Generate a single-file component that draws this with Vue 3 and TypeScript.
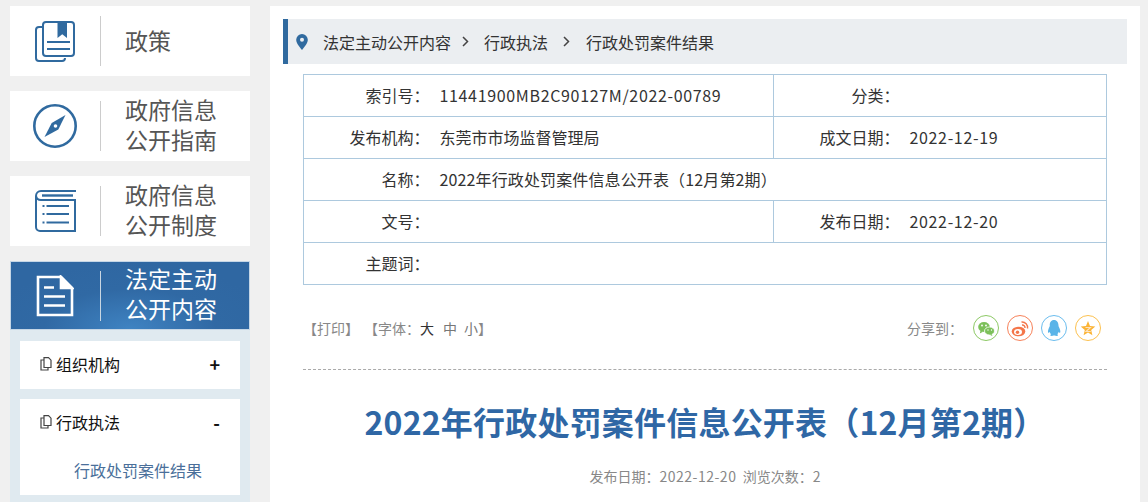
<script setup lang="ts">
interface Row { label: string; value: string; num?: boolean; wide?: boolean; label2?: string; value2?: string }
const rows: Row[] = [
  { label: '索引号：', value: '11441900MB2C90127M/2022-00789', num: true, label2: '分类：', value2: '' },
  { label: '发布机构：', value: '东莞市市场监督管理局', label2: '成文日期：', value2: '2022-12-19' },
  { label: '名称：', value: '2022年行政处罚案件信息公开表（12月第2期）', wide: true },
  { label: '文号：', value: '', label2: '发布日期：', value2: '2022-12-20' },
  { label: '主题词：', value: '' },
]
</script>

<template>
  <div class="page">
    <aside class="side">
      <a class="card">
        <span class="ico">
          <svg width="42" height="44" viewBox="0 -1 42 44" fill="none" stroke="#306a9f" stroke-width="2">
            <path d="M9 7H5a3 3 0 0 0-3 3V38a3 3 0 0 0 3 3H28a3 3 0 0 0 3-3" />
            <rect x="9" y="2" width="31" height="34" rx="3" />
            <path d="M23.500 1h9.500v17l-4.750-3.800-4.750 3.800z" fill="#306a9f" stroke="none" />
            <path d="M13 22h23M13 29h23" />
          </svg>
        </span>
        <span class="sep"></span>
        <span class="txt"><span class="ln">政策</span></span>
      </a>
      <a class="card">
        <span class="ico">
          <svg width="44" height="44" viewBox="0 0 44 44" fill="none">
            <circle cx="22" cy="22" r="20.700" stroke="#306a9f" stroke-width="2.600" />
            <path d="M32.500 11 25.300 25.500 11.500 33 18.700 19z" fill="#306a9f" />
            <circle cx="22.500" cy="22" r="1.800" fill="#fff" />
          </svg>
        </span>
        <span class="sep"></span>
        <span class="txt two"><span class="ln">政府信息</span><span class="ln">公开指南</span></span>
      </a>
      <a class="card">
        <span class="ico">
          <svg width="44" height="44" viewBox="0 0 44 44" fill="none" stroke="#306a9f" stroke-width="2">
            <path d="M43 2H8a5 5 0 0 0-5 5v31a4 4 0 0 0 4 4H42V11H8a5 5 0 0 1-5-4" />
            <path d="M9 6.500h31" stroke-width="2.400" />
            <path d="M13.500 17H36M13.500 25H36M13.500 33.500H36" stroke-width="2.200" />
            <path d="M9.500 17h2M9.500 25h2M9.500 33.500h2" stroke-dasharray="2 2" />
          </svg>
        </span>
        <span class="sep"></span>
        <span class="txt two"><span class="ln">政府信息</span><span class="ln">公开制度</span></span>
      </a>
      <div class="group">
        <a class="card active">
          <span class="ico">
            <svg width="38" height="42" viewBox="0 0 38 42" fill="none" stroke="#fff" stroke-width="2.600">
              <path d="M2 2H25L36 13V40H2z" />
              <path d="M25 2L36 13H25z" fill="#fff" />
              <path d="M8 12.500h10M8 21.500h21M8 30.500h21" />
            </svg>
          </span>
          <span class="sep"></span>
          <span class="txt two"><span class="ln">法定主动</span><span class="ln">公开内容</span></span>
        </a>
        <div class="panel">
          <div class="item">
            <div class="item-head">
              <svg class="doc" width="12" height="14" viewBox="0 0 12 14" fill="none" stroke="#444" stroke-width="1.200">
                <path d="M4 .7h4.500L11 3.200v7.300H4z" />
                <path d="M4 3H1v10h7v-2.500" />
              </svg>
              <span class="item-name">组织机构</span>
              <span class="mark">+</span>
            </div>
          </div>
          <div class="item">
            <div class="item-head">
              <svg class="doc" width="12" height="14" viewBox="0 0 12 14" fill="none" stroke="#444" stroke-width="1.200">
                <path d="M4 .7h4.500L11 3.200v7.300H4z" />
                <path d="M4 3H1v10h7v-2.500" />
              </svg>
              <span class="item-name">行政执法</span>
              <span class="mark">-</span>
            </div>
            <div class="sub">行政处罚案件结果</div>
          </div>
        </div>
      </div>
    </aside>

    <main class="main">
      <nav class="crumb">
        <svg class="pin" width="12" height="16" viewBox="0 0 12 16">
          <path fill-rule="evenodd" fill="#306a9f" d="M6 0a5.800 5.800 0 0 1 5.800 5.800C11.800 9.500 8 13.500 6 16 4 13.500.2 9.500.2 5.800A5.800 5.800 0 0 1 6 0zm0 3.800a2 2 0 1 0 0 4 2 2 0 0 0 0-4z" />
        </svg>
        <span>法定主动公开内容</span>
        <svg class="chev first" width="7" height="11" viewBox="0 0 7 11" fill="none" stroke="#444" stroke-width="1.500"><path d="m1 1 4.500 4.500L1 10" /></svg>
        <span>行政执法</span>
        <svg class="chev" width="7" height="11" viewBox="0 0 7 11" fill="none" stroke="#444" stroke-width="1.500"><path d="m1 1 4.500 4.500L1 10" /></svg>
        <span>行政处罚案件结果</span>
      </nav>

      <div class="wrap">
        <table class="meta">
          <colgroup>
            <col class="c1" /><col class="c2" /><col class="c3" /><col class="c4" />
          </colgroup>
          <tbody>
            <tr v-for="r in rows" :key="r.label">
              <td class="k">{{ r.label }}</td>
              <td v-if="r.label2 !== undefined" class="v" :class="{ num: r.num }">{{ r.value }}</td>
              <td v-else class="v" :class="{ wide: r.wide }" colspan="3">{{ r.value }}</td>
              <template v-if="r.label2 !== undefined">
                <td class="k">{{ r.label2 }}</td>
                <td class="v num">{{ r.value2 }}</td>
              </template>
            </tr>
          </tbody>
        </table>

        <div class="tools">
          <div class="print">
            <span>【打印】</span>
            <span class="fontset">【字体：<b class="big">大</b><i class="mid">中</i><i>小</i>】</span>
          </div>
          <div class="share">
            <span class="share-label">分享到：</span>
            <span class="sico wx">
              <svg width="18" height="18" viewBox="0 0 18 18">
                <ellipse cx="7" cy="8" rx="5.800" ry="5" fill="#7cc05a" />
                <path d="M3.500 11.500l-.7 3 3.200-1.700z" fill="#7cc05a" />
                <ellipse cx="12.500" cy="12" rx="5" ry="4" fill="#7cc05a" stroke="#fff" stroke-width=".8" />
                <path d="M14.500 15l1 2-3-1.200z" fill="#7cc05a" />
                <circle cx="5" cy="6.500" r=".9" fill="#fff" /><circle cx="9" cy="6.500" r=".9" fill="#fff" />
                <circle cx="11" cy="11" r=".7" fill="#fff" /><circle cx="14.500" cy="11" r=".7" fill="#fff" />
              </svg>
            </span>
            <span class="sico wb">
              <svg width="18" height="18" viewBox="0 0 18 18">
                <ellipse cx="7.500" cy="12.500" rx="6.800" ry="4.800" fill="#f4764a" />
                <ellipse cx="7" cy="13" rx="4" ry="2.900" fill="#fff" />
                <circle cx="6.500" cy="13.300" r="1.700" fill="#f4764a" />
                <path d="M10.500 3a5.500 5.500 0 0 1 6 6.500M11 6a2.700 2.700 0 0 1 3 3" fill="none" stroke="#f4764a" stroke-width="1.400" />
              </svg>
            </span>
            <span class="sico qq">
              <svg width="18" height="18" viewBox="0 0 18 18">
                <path fill="#5ab4e8" d="M9 1c3 0 4.500 2.500 4.500 5.500 0 1 .7 2 1.200 3.200.8 2 .8 3.800.3 4.100-.4.200-1-.4-1.300-1-.3 1.100-.8 2-1.500 2.500.7.300 1 .7.800 1.100-.3.600-2 .6-3.300.2H9.300c-.2 0-.4 0-.7 0-1.300.4-3 .4-3.300-.2-.2-.4.1-.8.800-1.100-.7-.5-1.200-1.400-1.500-2.500-.3.600-.9 1.200-1.300 1-.5-.3-.5-2.100.3-4.100.5-1.200 1.200-2.200 1.200-3.200C4.500 3.500 6 1 9 1z" />
              </svg>
            </span>
            <span class="sico st">
              <svg width="18" height="18" viewBox="0 0 18 18">
                <path fill="#fbb436" d="M9 2l2 5 5.300.5-4.100 3.500 1.200 5.200L9 13.400 4.600 16.200 5.800 11 1.700 7.500 7 7z" />
                <path d="M6.500 8.500h5l-4.500 4h4.800" fill="none" stroke="#fde2c0" stroke-width="1.100" />
              </svg>
            </span>
          </div>
        </div>

        <div class="dash"></div>
        <h1 class="title">2022年行政处罚案件信息公开表（12月第2期）</h1>
        <p class="info">发布日期：<span class="num-s">2022-12-20</span>&nbsp;&nbsp;浏览次数：2</p>
      </div>
    </main>
  </div>
</template>

<style>
html, body { margin: 0; background: #f0f0f0; overflow: hidden; }
</style>

<style scoped>
.page {
  width: 1148px;
  height: 502px;
  overflow: hidden;
  display: flex;
  align-items: flex-start;
  box-sizing: border-box;
  padding: 6px 8px 0 10px;
  gap: 20px;
  font-family: "Noto Sans CJK SC", "Noto Sans", sans-serif;
  color: #333;
}
.side { width: 240px; flex: none; display: flex; flex-direction: column; gap: 15px; }
.card {
  height: 70px;
  background: #fff;
  display: flex;
  align-items: center;
}
.ico { width: 90px; flex: none; display: flex; justify-content: center; align-items: center; }
.sep { width: 1px; height: 50px; background: #ccc; flex: none; }
.txt { margin-left: 24px; font-size: 23px; padding-bottom: 3px; color: #555; }
.txt.two { padding-bottom: 5px; }
.ln { display: block; line-height: 30px; }
.group { background: #e0eaf0; height: 241px; }
.card.active {
  height: 67px;
  border: 1px solid #c5d6e6;
  background: radial-gradient(ellipse 60% 100% at 50% 100%, #3f83c2 0%, #3069a4 60%, #2f67a2 100%);
}
.active .ico { width: 89px; padding-right: 2px; box-sizing: border-box; }
.active .sep { background: #c9d6e2; }
.active .txt { color: #fff; }
.panel { padding: 11px 10px 0; display: flex; flex-direction: column; gap: 10px; }
.item { background: #fff; }
.item-head { height: 48px; box-sizing: border-box; padding: 0 20px 2px; display: flex; align-items: center; font-size: 16px; color: #111; }
.doc { flex: none; margin-right: 4px; }
.item-name { flex: 1; }
.mark { font-weight: 700; font-size: 18px; color: #111; }
.sub { height: 48px; line-height: 46px; padding-left: 54px; font-size: 16px; color: #4a6f9a; }
.main { width: 870px; flex: none; height: 496px; background: #fff; box-sizing: border-box; padding: 13px 13px 0; }
.crumb {
  height: 45px;
  background: #ebeef1;
  border-left: 5px solid #306a9f;
  display: flex;
  align-items: center;
  padding-left: 8px;
  font-size: 16px;
  color: #333;
}
.pin { margin-right: 15px; }
.chev { margin: 0 16px 0 15px; }
.chev.first { margin: 0 15px 0 11px; }
.wrap { padding: 10px 20px 0; }
.meta { width: 803px; border-collapse: collapse; table-layout: fixed; font-size: 16px; color: #333; }
.c1 { width: 127px; }
.c2 { width: 343px; }
.c3 { width: 127px; }
.c4 { width: 206px; }
.meta td { border: 1px solid #adc9de; height: 42px; padding: 0 0 2px; box-sizing: border-box; }
.meta .k { text-align: right; border-right: 0; padding-right: 1px; }
.meta .v { padding-left: 9px; border-left: 0; }
.meta .num { letter-spacing: .66px; }
.meta .wide { letter-spacing: .13px; }
.tools { display: flex; justify-content: space-between; align-items: center; height: 84px; padding-top: 2px; box-sizing: border-box; font-size: 14px; color: #888; }
.print { display: flex; gap: 5px; }
.fontset b, .fontset i { font-style: normal; font-weight: 400; }
.fontset .big { color: #333; margin-right: 9px; }
.fontset .mid { margin-right: 7px; }
.fontset i { color: #777; }
.share { display: flex; align-items: center; gap: 8px; padding-right: 6px; }
.share-label { margin-right: 2px; }
.sico {
  width: 26px;
  height: 26px;
  box-sizing: border-box;
  border-radius: 50%;
  border: 1.500px solid;
  display: flex;
  align-items: center;
  justify-content: center;
}
.wx { border-color: #8dc965; }
.wb { border-color: #f7825a; }
.qq { border-color: #6bbdee; }
.st { border-color: #fcc14f; }
.dash { border-top: 1px dashed #aaa; }
.title { margin: 28px 0 0; text-align: center; font-size: 32px; line-height: 46px; font-weight: 700; color: #2f67a5; letter-spacing: .2px; }
.info { margin: 22px 0 0; text-align: center; font-size: 14px; line-height: 20px; color: #888; }
.num-s { letter-spacing: .5px; }
</style>
